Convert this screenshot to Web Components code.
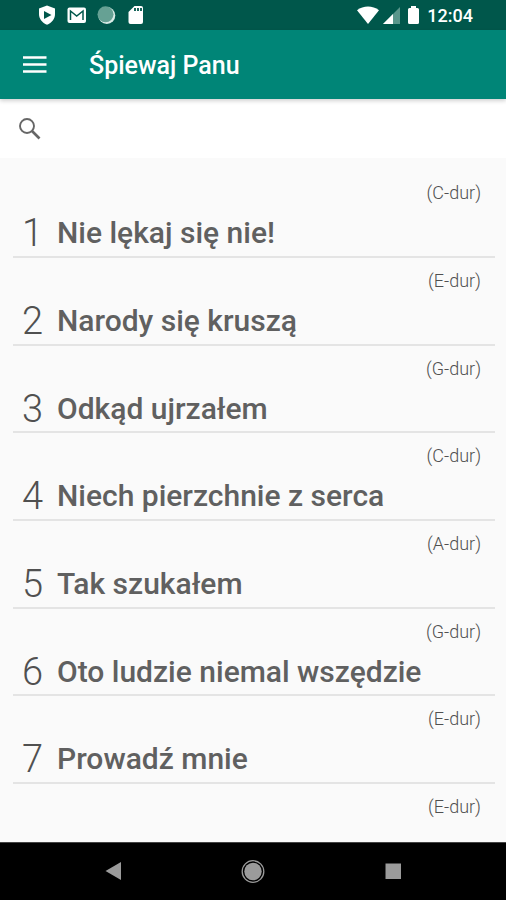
<!DOCTYPE html>
<html lang="pl">
<head>
<meta charset="utf-8">
<meta name="viewport" content="width=device-width, initial-scale=1">
<title>Śpiewaj Panu</title>
<style>
  html, body { height: 100%; margin: 0; }
  body { font-family: Roboto, "Noto Sans", sans-serif; background: #fafafa; }
</style>
</head>
<body>
<song-app></song-app>
<script>
const define = (name, html, setup) => {
  const template = document.createElement('template');
  template.innerHTML = '<style>*{box-sizing:border-box}svg{display:block}button{border:0;padding:0;background:none;font:inherit;color:inherit;cursor:pointer}</style>' + html;
  customElements.define(name, class extends HTMLElement {
    constructor() {
      super();
      this.attachShadow({ mode: 'open' }).append(template.content.cloneNode(true));
    }
    connectedCallback() { if (setup) setup(this, this.shadowRoot); }
  });
};

define('status-bar', `
<style>
  :host { display: flex; flex: none; align-items: center; justify-content: space-between; height: 30px; padding: 0 33px 0 37px; background: #00574b; color: #fff; }
  div { display: flex; align-items: center; }
  .notices { gap: 10px; }
  .system { gap: 4px; }
  time { font-size: 18px; font-weight: 500; line-height: 20px; padding-top: 2px; }
</style>
<div class="notices">
  <svg width="20" height="20" viewBox="0 0 20 20"><path fill="#fff" d="M10 .5 18 3.4V9c0 5-3.200 8.800-8 10.700C5.200 17.800 2 14 2 9V3.400z"/><path fill="#00574b" d="M7 6v8l7.500-4z"/></svg>
  <svg width="20" height="20" viewBox="0 0 20 20"><rect x=".5" y="2.500" width="18.500" height="15.500" rx="2" fill="#fff"/><path d="M3.500 15V6l6.200 5L16 6v9" fill="none" stroke="#00574b" stroke-width="1.500"/></svg>
  <svg width="20" height="20" viewBox="0 0 20 20"><circle cx="9.800" cy="10.500" r="8.500" fill="#d9ebe6"/><circle cx="8.500" cy="9.300" r="8" fill="#66a194"/></svg>
  <svg width="20" height="20" viewBox="0 0 20 20"><path fill="#fff" d="M7.500 1H14q2 0 2 2v14q0 2-2 2H3.500q-2 0-2-2V7z"/><path stroke="#00574b" stroke-width="1.800" d="M8 3v3M11 3v3M14 3v3"/></svg>
</div>
<div class="system">
  <svg width="22" height="20" viewBox="0 0 22 20"><path fill="#fff" d="M0 5.200C6.500.3 15.500.3 22 5.200L11 19z"/></svg>
  <svg width="18" height="20" viewBox="0 0 18 20"><path fill="#59968b" d="M17 2v17H0z"/><path fill="#fff" d="M10 9v10H0z"/></svg>
  <svg width="18" height="20" viewBox="0 0 18 20"><path fill="#fff" d="M6 1h5v2h1.500q1.500 0 1.500 1.500v13q0 1.500-1.500 1.500h-8Q3 19 3 17.500v-13Q3 3 4.500 3H6z"/></svg>
  <time>12:04</time>
</div>`);

define('app-bar', `
<style>
  :host { display: flex; flex: none; align-items: center; gap: 42px; height: 69px; padding: 0 23px; background: #008577; color: #fff; box-shadow: 0 2px 4px #0000002e; position: relative; z-index: 1; }
  h1 { margin: 0; padding-top: 3px; font-size: 25px; font-weight: 500; line-height: 32px; }
</style>
<button aria-label="Menu"><svg width="24" height="24" viewBox="0 0 24 24"><path stroke="#fff" stroke-width="2.700" d="M0 4.500h23.500M0 11.500h23.500M0 18.500h23.500"/></svg></button>
<h1><slot></slot></h1>`);

define('search-field', `
<style>
  :host { display: flex; flex: none; align-items: center; gap: 12px; height: 59px; padding: 0 19px; background: #fff; }
  label { flex: none; }
  input { flex: 1; min-width: 0; border: 0; outline: 0; background: none; font: inherit; font-size: 22px; color: #666; }
</style>
<label for="query" aria-label="Szukaj"><svg width="22" height="22" viewBox="0 0 22 22"><g fill="none" stroke="#666"><circle cx="8" cy="8" r="7" stroke-width="1.900"/><path d="m13 13 7.500 7.500" stroke-width="2.600"/></g></svg></label>
<input id="query" type="text">`);

define('song-item', `
<style>
  :host { display: block; flex: none; height: 88px; border-bottom: 2px solid #e4e4e4; color: #606060; }
  button { display: flex; flex-direction: column; width: 100%; padding: 12px 14px 0 8px; text-align: left; }
  .key { align-self: flex-end; font-size: 18px; font-weight: 300; line-height: 22px; color: #505050; }
  .row { display: flex; align-items: center; line-height: 44px; padding-top: 7px; }
  .number { flex: none; width: 36px; font-size: 38px; font-weight: 300; padding-left: 1px; color: #505050; }
  .title { font-size: 30px; font-weight: 500; line-height: 42px; white-space: nowrap; }
</style>
<button>
  <span class="key"></span>
  <span class="row"><span class="number"></span><span class="title"><slot></slot></span></span>
</button>`, (host, root) => {
  root.querySelector('.key').textContent = '(' + host.getAttribute('key') + ')';
  root.querySelector('.number').textContent = host.getAttribute('number');
});

define('song-list', `
<style>
  :host { display: flex; flex-direction: column; flex: 1; min-height: 0; overflow: hidden; padding: 12px 11px 0 13px; background: #fafafa; }
  ::slotted(:nth-child(3n)) { height: 87px; }
</style>
<slot></slot>`);

define('nav-bar', `
<style>
  :host { display: flex; flex: none; align-items: center; justify-content: center; gap: 116px; height: 58px; background: #000; border-top: 1px solid #444; }
</style>
<button aria-label="Wstecz"><svg width="24" height="24" viewBox="0 0 24 24"><path fill="#9b9b9b" d="M4.500 11 20 2v18z"/></svg></button>
<button aria-label="Ekran główny"><svg width="24" height="24" viewBox="0 0 24 24"><circle cx="12" cy="11.500" r="10.800" fill="none" stroke="#9b9b9b" stroke-width="1.300"/><circle cx="12" cy="11.500" r="8.700" fill="#9b9b9b"/></svg></button>
<button aria-label="Ostatnie aplikacje"><svg width="24" height="24" viewBox="0 0 24 24"><path fill="#9b9b9b" d="M4.500 3.500h15.500v15.500H4.500z"/></svg></button>`);

define('song-app', `
<style>:host { display: flex; flex-direction: column; height: 100vh; }</style>
<status-bar></status-bar>
<app-bar>Śpiewaj Panu</app-bar>
<search-field></search-field>
<song-list>
  <song-item number="1" key="C-dur">Nie lękaj się nie!</song-item>
  <song-item number="2" key="E-dur">Narody się kruszą</song-item>
  <song-item number="3" key="G-dur">Odkąd ujrzałem</song-item>
  <song-item number="4" key="C-dur">Niech pierzchnie z serca</song-item>
  <song-item number="5" key="A-dur">Tak szukałem</song-item>
  <song-item number="6" key="G-dur">Oto ludzie niemal wszędzie</song-item>
  <song-item number="7" key="E-dur">Prowadź mnie</song-item>
  <song-item number="" key="E-dur"></song-item>
</song-list>
<nav-bar></nav-bar>`);
</script>
</body>
</html>
